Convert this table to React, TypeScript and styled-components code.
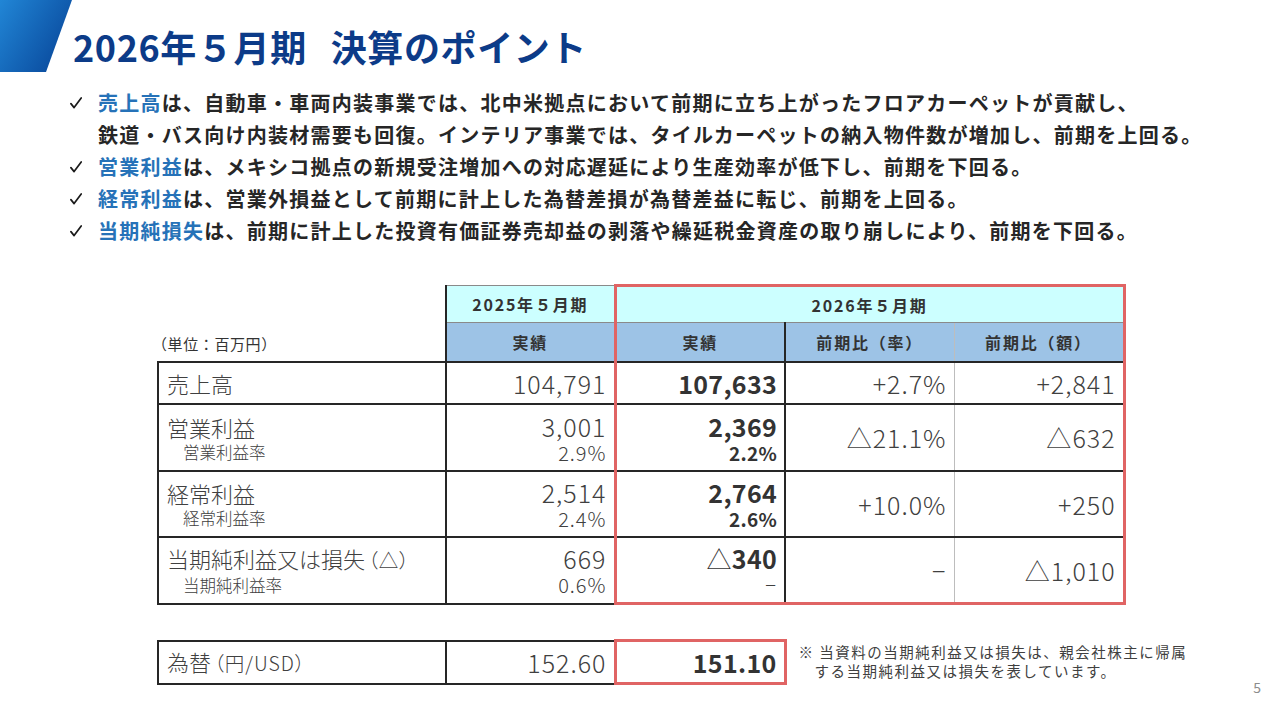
import React from 'react';
import styled, { createGlobalStyle } from 'styled-components';

const Global = createGlobalStyle`
  html, body { margin: 0; padding: 0; background: #fff; }
  body { font-family: "Noto Sans CJK JP", "Noto Sans", sans-serif; color: #333; }
`;

const Page = styled.div`
  width: 1280px;
  height: 720px;
  overflow: hidden;
  background: #fff;
  display: flex;
  flex-direction: column;
`;

const Header = styled.header`
  display: flex;
  align-items: flex-end;
  height: 72px;
`;

const Title = styled.h1`
  margin: 0 0 8px 1px;
  font-size: 36px;
  line-height: 36px;
  font-weight: 700;
  color: #0c3b88;
  letter-spacing: 0.6px;
  white-space: nowrap;
`;

const TitleGap = styled.span`
  display: inline-block;
  width: 24px;
`;

const Bullets = styled.ul`
  list-style: none;
  margin: 15px 0 0;
  padding: 0 0 0 70px;
`;

const Item = styled.li`
  display: grid;
  grid-template-columns: 28px auto;
  font-size: 20px;
  line-height: 32px;
  font-weight: 700;
  color: #262626;
  letter-spacing: 1.25px;
  white-space: nowrap;
`;

const CheckBox = styled.span`
  display: flex;
  align-items: flex-start;
  padding-top: 10px;
`;

const Key = styled.span`
  color: #2672b8;
`;

const TableArea = styled.div`
  margin-top: 37px;
  padding-left: 157px;
`;

const Table = styled.table<{ $w: number }>`
  border-collapse: collapse;
  table-layout: fixed;
  width: ${(p) => p.$w}px;
`;

const DARK = '2px solid #262626';
const RED = '3px solid #e06464';
const GRAY = '1px solid #bdbdbd';
const HEAD_LINE = '1px solid #8a8a8a';

type Borders = { $l?: string; $r?: string; $t?: string; $b?: string };

const HeadCell = styled.th<Borders & { $bg?: string; $h: number }>`
  padding: 0;
  height: ${(p) => p.$h}px;
  background: ${(p) => p.$bg || 'transparent'};
  font-size: 16px;
  font-weight: 700;
  letter-spacing: 1.8px;
  color: #333;
  text-align: center;
  vertical-align: middle;
  border-left: ${(p) => p.$l || 'none'};
  border-right: ${(p) => p.$r || 'none'};
  border-top: ${(p) => p.$t || 'none'};
  border-bottom: ${(p) => p.$b || 'none'};
`;

const UnitCell = styled.th`
  padding: 3px 0 0;
  text-align: left;
  text-indent: -6px;
  vertical-align: middle;
  font-size: 15px;
  font-weight: 400;
  letter-spacing: 0.6px;
  color: #333;
  white-space: nowrap;
  border-bottom: ${DARK};
`;

const Cell = styled.td<Borders & { $h: number; $align?: 'left' | 'right' }>`
  height: ${(p) => p.$h}px;
  padding: 0 ${(p) => (p.$align === 'left' ? '0' : '7px')} 0 ${(p) => (p.$align === 'left' ? '8px' : '0')};
  text-align: ${(p) => p.$align || 'right'};
  vertical-align: middle;
  border-left: ${(p) => p.$l || 'none'};
  border-right: ${(p) => p.$r || 'none'};
  border-top: ${(p) => p.$t || DARK};
  border-bottom: ${(p) => p.$b || DARK};
  white-space: nowrap;
`;

const Stack = styled.div`
  display: flex;
  flex-direction: column;
`;

const Label = styled.span`
  font-size: 22px;
  line-height: 28px;
  font-weight: 300;
  color: #404040;
`;

const LabelSmall = styled.span`
  font-size: 19.5px;
  font-weight: 300;
  font-feature-settings: "palt";
  letter-spacing: 1px;
  margin-left: 3px;
`;

const SubLabel = styled.span`
  font-size: 16.5px;
  line-height: 22px;
  font-weight: 300;
  color: #404040;
  padding-left: 16px;
`;

const Value = styled.span<{ $bold?: boolean }>`
  font-size: 25px;
  line-height: 30px;
  font-weight: ${(p) => (p.$bold ? 700 : 300)};
  letter-spacing: ${(p) => (p.$bold ? '0.3px' : '1px')};
  color: ${(p) => (p.$bold ? '#333' : '#404040')};
`;

const SubValue = styled.span<{ $bold?: boolean }>`
  font-size: ${(p) => (p.$bold ? '19px' : '20px')};
  line-height: 24px;
  font-weight: ${(p) => (p.$bold ? 700 : 300)};
  letter-spacing: ${(p) => (p.$bold ? '0.3px' : '1px')};
  color: ${(p) => (p.$bold ? '#333' : '#404040')};
`;

const Tri = styled.span`
  font-weight: 300;
`;

const BottomRow = styled.div`
  display: flex;
  margin-top: 34px;
  padding-left: 157px;
`;

const Note = styled.p`
  margin: 3px 0 0 12px;
  font-size: 14.5px;
  line-height: 19px;
  letter-spacing: 1.5px;
  color: #404040;
  white-space: nowrap;
`;

const NoteLine = styled.span<{ $indent?: boolean }>`
  display: block;
  padding-left: ${(p) => (p.$indent ? '16px' : '0')};
`;

const PageNum = styled.span`
  margin-left: auto;
  margin-right: 19px;
  margin-bottom: -9px;
  align-self: flex-end;
  font-size: 14px;
  line-height: 14px;
  color: #8c8c8c;
`;

const Logo = () => (
  <svg width="72" height="72" viewBox="0 0 72 72">
    <defs>
      <linearGradient id="lg" x1="0" y1="0" x2="1" y2="0.6">
        <stop offset="0" stopColor="#2186d6" />
        <stop offset="1" stopColor="#0a4b9e" />
      </linearGradient>
    </defs>
    <polygon points="0,0 72,0 46,72 0,72" fill="url(#lg)" />
  </svg>
);

const Check = () => (
  <svg width="12" height="12" viewBox="0 0 12 12">
    <path d="M0.9 6.6 L4.1 10.6 L11.2 1" fill="none" stroke="#1a1a1a" strokeWidth="1.7" strokeLinecap="round" strokeLinejoin="round" />
  </svg>
);

type Row = {
  label: string;
  labelExtra?: string;
  sub?: string;
  h: number;
  prev: string;
  prevSub?: string;
  cur: React.ReactNode;
  curSub?: string;
  rate: React.ReactNode;
  amount: React.ReactNode;
};

const rows: Row[] = [
  { label: '売上高', h: 40, prev: '104,791', cur: '107,633', rate: '+2.7%', amount: '+2,841' },
  {
    label: '営業利益', sub: '営業利益率', h: 65, prev: '3,001', prevSub: '2.9%', cur: '2,369', curSub: '2.2%',
    rate: <><Tri>△</Tri>21.1%</>, amount: <><Tri>△</Tri>632</>,
  },
  {
    label: '経常利益', sub: '経常利益率', h: 64, prev: '2,514', prevSub: '2.4%', cur: '2,764', curSub: '2.6%',
    rate: '+10.0%', amount: '+250',
  },
  {
    label: '当期純利益又は損失', labelExtra: '（△）', sub: '当期純利益率', h: 64, prev: '669', prevSub: '0.6%',
    cur: <><Tri>△</Tri>340</>, curSub: '−', rate: '−', amount: <><Tri>△</Tri>1,010</>,
  },
];

export default function App() {
  return (
    <Page>
      <Global />
      <Header>
        <Logo />
        <Title>
          2026年５月期<TitleGap />決算のポイント
        </Title>
      </Header>

      <Bullets>
        <Item>
          <CheckBox><Check /></CheckBox>
          <span>
            <Key>売上高</Key>は、自動車・車両内装事業では、北中米拠点において前期に立ち上がったフロアカーペットが貢献し、
            <br />
            鉄道・バス向け内装材需要も回復。インテリア事業では、タイルカーペットの納入物件数が増加し、前期を上回る。
          </span>
        </Item>
        <Item>
          <CheckBox><Check /></CheckBox>
          <span>
            <Key>営業利益</Key>は、メキシコ拠点の新規受注増加への対応遅延により生産効率が低下し、前期を下回る。
          </span>
        </Item>
        <Item>
          <CheckBox><Check /></CheckBox>
          <span>
            <Key>経常利益</Key>は、営業外損益として前期に計上した為替差損が為替差益に転じ、前期を上回る。
          </span>
        </Item>
        <Item>
          <CheckBox><Check /></CheckBox>
          <span>
            <Key>当期純損失</Key>は、前期に計上した投資有価証券売却益の剥落や繰延税金資産の取り崩しにより、前期を下回る。
          </span>
        </Item>
      </Bullets>

      <TableArea>
        <Table $w={966}>
          <colgroup>
            <col style={{ width: 288 }} />
            <col style={{ width: 169 }} />
            <col style={{ width: 170 }} />
            <col style={{ width: 169 }} />
            <col style={{ width: 170 }} />
          </colgroup>
          <thead>
            <tr>
              <HeadCell $h={35} />
              <HeadCell $h={35} $bg="#ccffff" $l={DARK} $t={HEAD_LINE} $b={HEAD_LINE}>
                2025年５月期
              </HeadCell>
              <HeadCell $h={35} colSpan={3} $bg="#ccffff" $l={RED} $r={RED} $t={RED} $b={HEAD_LINE}>
                2026年５月期
              </HeadCell>
            </tr>
            <tr>
              <UnitCell>（単位：百万円）</UnitCell>
              <HeadCell $h={38} $bg="#9dc3e6" $l={DARK} $b={DARK}>実績</HeadCell>
              <HeadCell $h={38} $bg="#9dc3e6" $l={RED} $r={DARK} $b={DARK}>実績</HeadCell>
              <HeadCell $h={38} $bg="#9dc3e6" $r={GRAY} $b={DARK}>前期比（率）</HeadCell>
              <HeadCell $h={38} $bg="#9dc3e6" $r={RED} $b={DARK}>前期比（額）</HeadCell>
            </tr>
          </thead>
          <tbody>
            {rows.map((r, i) => {
              const last = i === rows.length - 1;
              return (
                <tr key={r.label}>
                  <Cell $h={r.h} $align="left" $l={DARK}>
                    <Stack>
                      <Label>
                        {r.label}
                        {r.labelExtra && <LabelSmall>{r.labelExtra}</LabelSmall>}
                      </Label>
                      {r.sub && <SubLabel>{r.sub}</SubLabel>}
                    </Stack>
                  </Cell>
                  <Cell $h={r.h} $l={DARK}>
                    <Stack>
                      <Value>{r.prev}</Value>
                      {r.prevSub && <SubValue>{r.prevSub}</SubValue>}
                    </Stack>
                  </Cell>
                  <Cell $h={r.h} $l={RED} $r={DARK} $b={last ? RED : DARK}>
                    <Stack>
                      <Value $bold>{r.cur}</Value>
                      {r.curSub && <SubValue $bold={r.curSub !== '−'}>{r.curSub}</SubValue>}
                    </Stack>
                  </Cell>
                  <Cell $h={r.h} $r={GRAY} $b={last ? RED : DARK}>
                    <Value>{r.rate}</Value>
                  </Cell>
                  <Cell $h={r.h} $r={RED} $b={last ? RED : DARK}>
                    <Value>{r.amount}</Value>
                  </Cell>
                </tr>
              );
            })}
          </tbody>
        </Table>
      </TableArea>

      <BottomRow>
        <Table $w={627}>
          <colgroup>
            <col style={{ width: 288 }} />
            <col style={{ width: 169 }} />
            <col style={{ width: 170 }} />
          </colgroup>
          <tbody>
            <tr>
              <Cell $h={40} $align="left" $l={DARK}>
                <Label>
                  為替<LabelSmall>（円/USD）</LabelSmall>
                </Label>
              </Cell>
              <Cell $h={40} $l={DARK}>
                <Value>152.60</Value>
              </Cell>
              <Cell $h={40} $l={RED} $r={RED} $t={RED} $b={RED}>
                <Value $bold>151.10</Value>
              </Cell>
            </tr>
          </tbody>
        </Table>
        <Note>
          <NoteLine>※ 当資料の当期純利益又は損失は、親会社株主に帰属</NoteLine>
          <NoteLine $indent>する当期純利益又は損失を表しています。</NoteLine>
        </Note>
        <PageNum>5</PageNum>
      </BottomRow>
    </Page>
  );
}
